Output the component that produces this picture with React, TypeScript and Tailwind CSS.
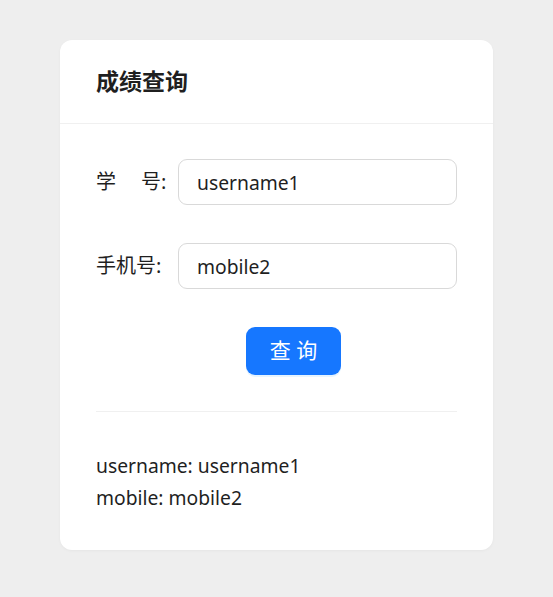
const font = "font-['Segoe_UI','Noto_Sans','Noto_Sans_CJK_SC',sans-serif]";

const Field = ({ label, value }: { label: React.ReactNode; value: string }) => (
  <div className="flex items-center">
    <label className="w-[82px] shrink-0 text-[20px] text-[#1f1f1f]">{label}</label>
    <input
      readOnly
      value={value}
      className="h-[46px] w-0 min-w-0 flex-1 rounded-[9px] border border-[#d9d9d9] bg-white px-[18px] text-[19.3px] text-[#1f1f1f] outline-none"
    />
  </div>
);

export default function App() {
  return (
    <div className={`min-h-[597px] bg-[#eeeeee] pt-[40px] ${font}`}>
      <div className="ml-[60px] w-[433px] rounded-[12px] bg-white shadow-[0_1px_3px_rgba(0,0,0,0.04)]">
        <div className="flex h-[84px] items-center border-b border-[#f0f0f0] px-[36px]">
          <h1 className="text-[23px] font-bold text-[#1f1f1f]">成绩查询</h1>
        </div>
        <div className="px-[36px] pt-[35px] pb-[36px]">
          <div className="flex flex-col gap-[38px]">
            <Field
              label={
                <>
                  学<span className="inline-block w-[25px]" />号:
                </>
              }
              value="username1"
            />
            <Field label="手机号:" value="mobile2" />
          </div>
          <div className="mt-[38px] flex pl-[150px]">
            <button className="h-[48px] w-[95px] rounded-[9px] bg-[#1677ff] text-[21px] text-white shadow-[0_2px_0_rgba(5,145,255,0.1)]">
              查 询
            </button>
          </div>
          <div className="mt-[36px] mb-[38px] border-t border-[#f0f0f0]" />
          <div className="text-[19.3px] leading-[32px] text-[#1f1f1f]">
            <div>username: username1</div>
            <div>mobile: mobile2</div>
          </div>
        </div>
      </div>
    </div>
  );
}
